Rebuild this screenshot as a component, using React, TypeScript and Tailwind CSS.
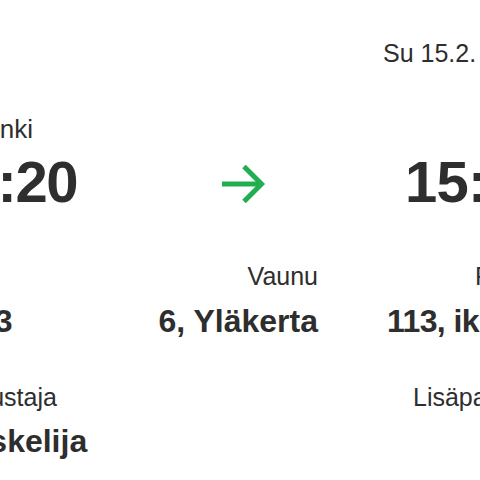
import React from "react";

const label = "text-[25px] leading-[30px] font-normal whitespace-nowrap";
const value = "text-[32px] leading-[38px] font-bold whitespace-nowrap";

function Arrow() {
  return (
    <svg width="46" height="42" viewBox="0 0 46 42" fill="none" stroke="#1fae50" strokeWidth="5">
      <path d="M1 21H40" strokeLinecap="butt" />
      <path d="M23 3.5L40.5 21L23 38.5" strokeLinejoin="miter" strokeLinecap="butt" />
    </svg>
  );
}

export default function App() {
  return (
    <div
      className="w-[480px] h-[480px] overflow-hidden bg-white text-[#2e2e2e]"
      style={{ fontFamily: '"Liberation Sans", Arial, sans-serif' }}
    >
      <div className="ml-[-64px] w-[616px] pt-[38px] grid grid-cols-[234px_148px_234px]">
        {/* date row */}
        <div className={`${label} text-[#efefef]`}>Lähtö</div>
        <div />
        <div className={`${label} pl-[65px]`}>Su 15.2.</div>

        {/* station row */}
        <div className={`${label} mt-[46px] pl-[6px] text-[26px]`}>Helsinki</div>
        <div className="mt-[46px]" />
        <div className="mt-[46px]" />

        {/* time row */}
        <div className="mt-[6px] text-[58px] leading-[64px] font-bold tracking-[-1.45px] whitespace-nowrap">14:20</div>
        <div className="mt-[6px] flex items-center justify-center pt-[3px]">
          <Arrow />
        </div>
        <div className="mt-[6px] pl-[87px] text-[58px] leading-[64px] font-bold tracking-[-0.8px] whitespace-nowrap">15:45</div>

        {/* labels */}
        <div className={`${label} mt-[47px]`}>Juna</div>
        <div className={`${label} mt-[47px] flex justify-end`}>Vaunu</div>
        <div className={`${label} mt-[47px] pl-[157px]`}>Paikka</div>

        {/* values */}
        <div className={`${value} mt-[11px]`}>IC 43</div>
        <div className={`${value} mt-[11px] flex justify-end`}>6, Yläkerta</div>
        <div className={`${value} mt-[11px] pl-[69px] tracking-[-0.6px]`}>113, ikkuna</div>

        {/* labels 2 */}
        <div className={`${label} mt-[42px]`}>Matkustaja</div>
        <div className="mt-[42px]" />
        <div className={`${label} mt-[42px] pl-[95px]`}>Lisäpalvelut</div>

        {/* values 2 */}
        <div className={`${value} mt-[10px]`}>Opiskelija</div>
        <div className="mt-[10px]" />
        <div className="mt-[10px]" />
      </div>
    </div>
  );
}
